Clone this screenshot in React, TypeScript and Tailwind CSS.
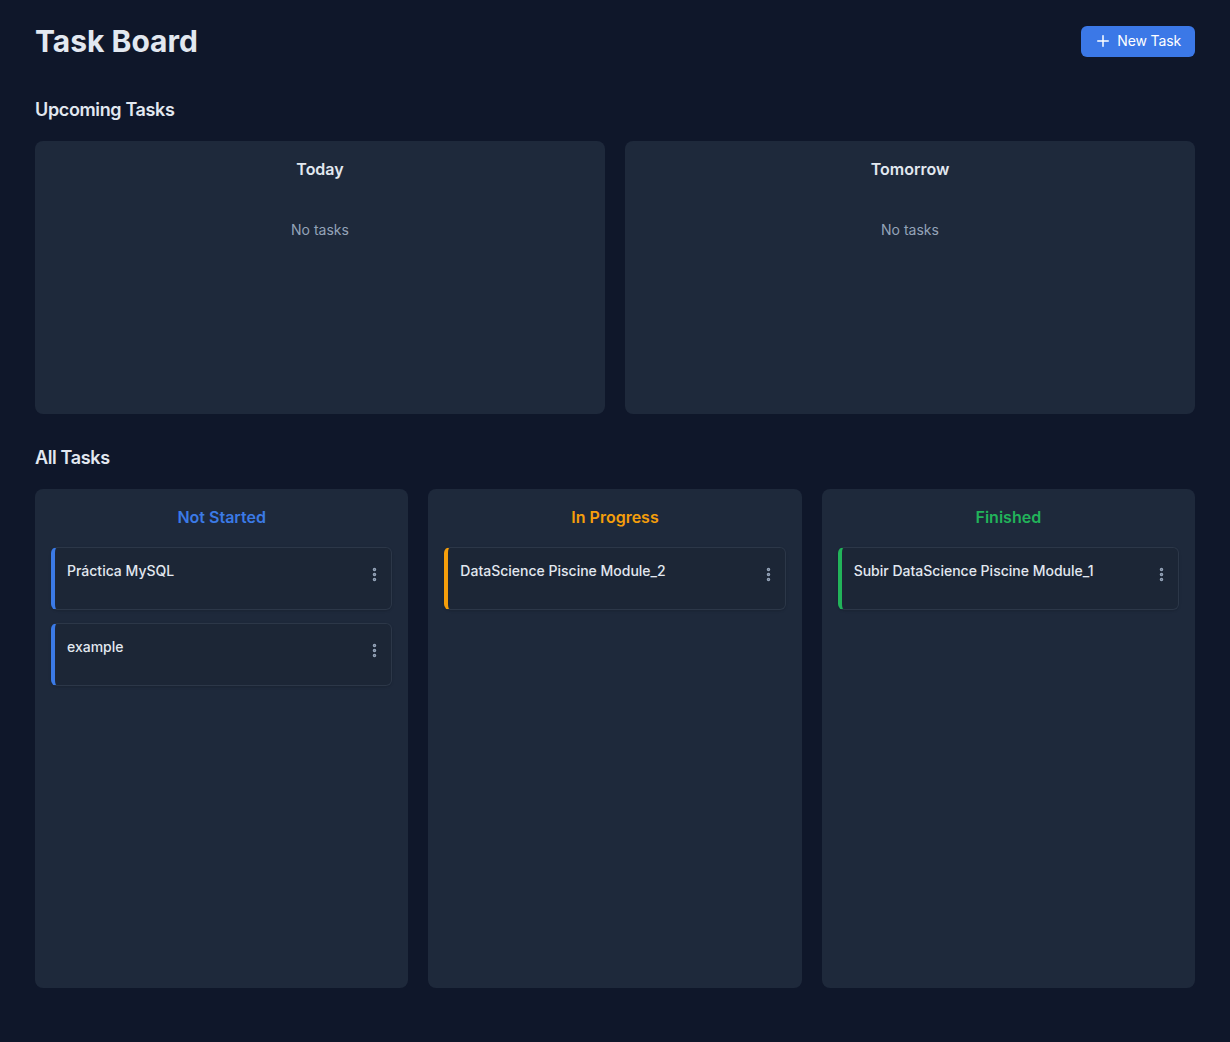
import { Plus, EllipsisVertical } from "lucide-react";

const upcoming = [
  { id: "today", title: "Today" },
  { id: "tomorrow", title: "Tomorrow" },
];

const columns = [
  {
    id: "not-started",
    title: "Not Started",
    titleClass: "text-[#3b7ae6]",
    borderClass: "border-l-[#3b7ae6]",
    tasks: ["Práctica MySQL", "example"],
  },
  {
    id: "in-progress",
    title: "In Progress",
    titleClass: "text-[#f59e0b]",
    borderClass: "border-l-[#f59e0b]",
    tasks: ["DataScience Piscine Module_2"],
  },
  {
    id: "finished",
    title: "Finished",
    titleClass: "text-[#22b35a]",
    borderClass: "border-l-[#22b35a]",
    tasks: ["Subir DataScience Piscine Module_1"],
  },
];

function TaskCard({ title, borderClass }: { title: string; borderClass: string }) {
  return (
    <div
      className={`flex items-start justify-between h-[63px] rounded-md border border-[#2c3748] border-l-4 ${borderClass} bg-[#1c2636] pl-3 pr-2 pt-[13px] shadow-sm`}
    >
      <span className="text-sm font-medium text-[#e2e8f0] leading-5">{title}</span>
      <button className="mt-[5px] text-[#94a3b8]">
        <EllipsisVertical size={17} strokeWidth={3} />
      </button>
    </div>
  );
}

export default function App() {
  return (
    <div
      className="min-h-screen w-full bg-[#0f172a] px-[35px] pt-[23px] pb-12 text-[#e2e8f0]"
      style={{ fontFamily: "Inter, 'Noto Sans', sans-serif" }}
    >
      {/* Header */}
      <div className="flex items-center justify-between">
        <h1 className="text-3xl font-bold leading-9 text-[#e2e8f0]">Task Board</h1>
        <button className="flex items-center gap-[5px] h-[31px] pl-[13px] pr-[14px] rounded-md bg-[#3b78e7] text-sm tracking-[-0.01em] text-white">
          <Plus size={18} strokeWidth={2} />
          New Task
        </button>
      </div>

      {/* Upcoming */}
      <h2 className="mt-[37px] text-lg font-semibold leading-7 tracking-[-0.02em]">Upcoming Tasks</h2>
      <div className="mt-[17px] grid grid-cols-2 gap-5">
        {upcoming.map((u) => (
          <div key={u.id} className="h-[273px] rounded-lg bg-[#1e293b] pt-4 text-center">
            <h3 className="text-base font-semibold leading-6">{u.title}</h3>
            <p className="mt-[39px] text-sm leading-5 text-[#94a3b8]">No tasks</p>
          </div>
        ))}
      </div>

      {/* All tasks */}
      <h2 className="mt-[30px] text-lg font-semibold leading-7 tracking-[-0.02em]">All Tasks</h2>
      <div className="mt-[17px] grid grid-cols-3 gap-5">
        {columns.map((col) => (
          <div key={col.id} className="h-[499px] rounded-lg bg-[#1e293b] px-4 pt-4">
            <h3 className={`text-center text-base font-semibold leading-6 ${col.titleClass}`}>
              {col.title}
            </h3>
            <div className="mt-[18px] flex flex-col gap-[13px]">
              {col.tasks.map((t) => (
                <TaskCard key={t} title={t} borderClass={col.borderClass} />
              ))}
            </div>
          </div>
        ))}
      </div>
    </div>
  );
}
